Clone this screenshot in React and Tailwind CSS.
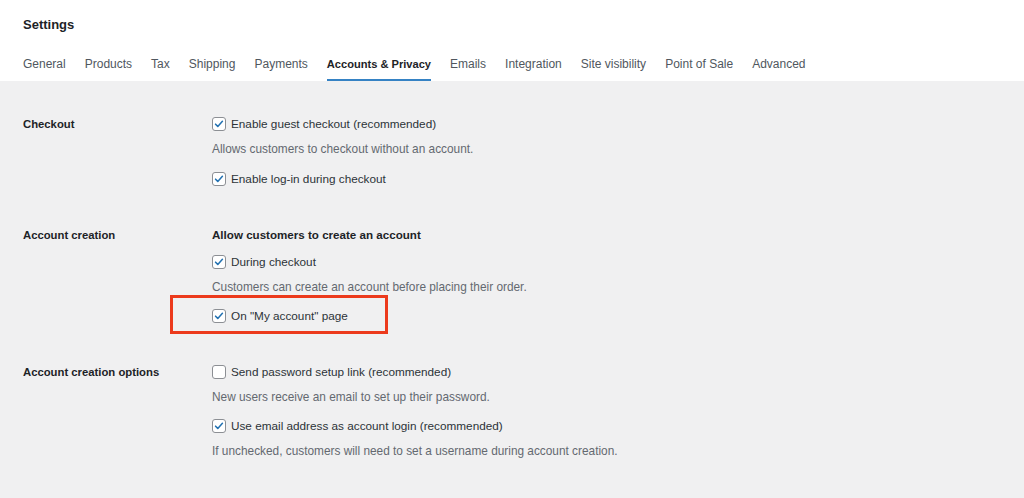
import React from 'react'

const TABS = ['General', 'Products', 'Tax', 'Shipping', 'Payments', 'Accounts & Privacy', 'Emails', 'Integration', 'Site visibility', 'Point of Sale', 'Advanced']

function Check({ checked }) {
  return (
    <span className="w-[14px] h-[14px] shrink-0 rounded-[3px] border border-[#8c8f94] bg-white flex items-center justify-center">
      {checked && (
        <svg viewBox="0 0 14 14" className="w-[12px] h-[12px]">
          <path d="M3 7.2l2.6 2.6L11 3.8" fill="none" stroke="#2271b1" strokeWidth="1.8" strokeLinecap="round" strokeLinejoin="round" />
        </svg>
      )}
    </span>
  )
}

function Option({ checked, label, className = '' }) {
  return (
    <div className={`flex items-center gap-[5px] h-[18px] text-[11.75px] text-[#2c3338] ${className}`}>
      <Check checked={checked} />
      <span>{label}</span>
    </div>
  )
}

function Desc({ children }) {
  return <div className="mt-[7px] h-[18px] leading-[18px] text-[11.85px] text-[#646970]">{children}</div>
}

function Row({ label, children, className = '' }) {
  return (
    <div className={`flex ${className}`}>
      <div className="w-[189px] shrink-0 h-[18px] leading-[18px] text-[11.3px] font-semibold text-[#1d2327]">{label}</div>
      <div className="flex flex-col">{children}</div>
    </div>
  )
}

export default function App() {
  return (
    <div className="w-[1024px] h-[498px] bg-[#f0f0f1] overflow-hidden" style={{ fontFamily: '"Liberation Sans", Arial, sans-serif' }}>
      <header className="bg-white h-[81px] px-[23px] flex flex-col">
        <h1 className="mt-[16px] h-[18px] leading-[18px] text-[13px] font-semibold text-[#1d2327]">Settings</h1>
        <nav className="mt-[20px] flex gap-[19px]">
          {TABS.map(t => (
            <div
              key={t}
              className={`h-[27px] pt-[1px] leading-[18px] ${t === 'Accounts & Privacy' ? 'text-[11.1px] font-semibold text-[#1d2327] border-b-2 border-[#3582c4]' : 'text-[12px] text-[#50575e]'}`}
            >
              {t}
            </div>
          ))}
        </nav>
      </header>

      <main className="px-[23px] pt-[34px]">
        <Row label="Checkout">
          <Option checked label="Enable guest checkout (recommended)" />
          <Desc>Allows customers to checkout without an account.</Desc>
          <Option checked label="Enable log-in during checkout" className="mt-[12px]" />
        </Row>

        <Row label="Account creation" className="mt-[38px]">
          <div className="h-[18px] leading-[18px] text-[11.6px] font-semibold text-[#1d2327]">Allow customers to create an account</div>
          <Option checked label="During checkout" className="mt-[9px]" />
          <Desc>Customers can create an account before placing their order.</Desc>
          <div className="relative mt-[11px]">
            <Option checked label={'On "My account" page'} />
            <div className="absolute left-[-42px] top-[-12px] w-[218px] h-[39px] border-[3px] border-[#ec3a1c]" />
          </div>
        </Row>

        <Row label="Account creation options" className="mt-[38px]">
          <Option label="Send password setup link (recommended)" />
          <Desc>New users receive an email to set up their password.</Desc>
          <Option checked label="Use email address as account login (recommended)" className="mt-[11px]" />
          <Desc>If unchecked, customers will need to set a username during account creation.</Desc>
        </Row>
      </main>
    </div>
  )
}
